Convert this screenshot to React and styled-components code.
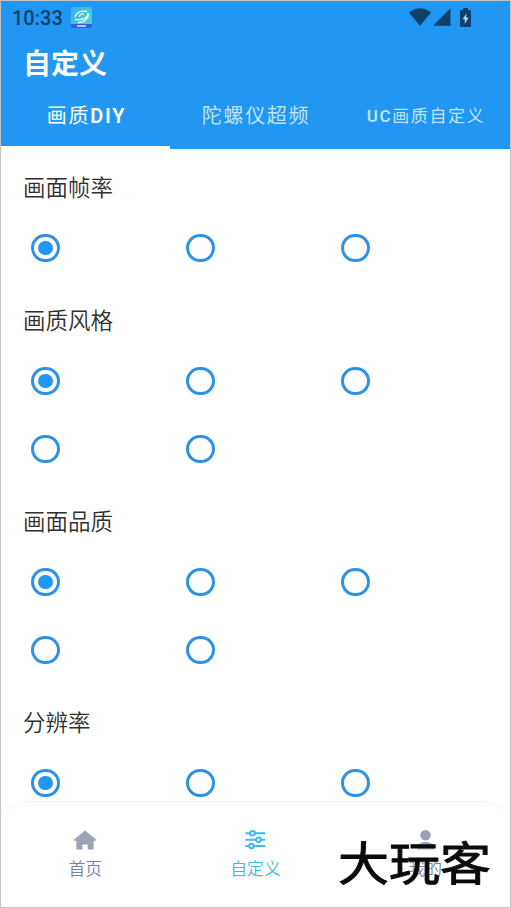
import styled, {createGlobalStyle} from "styled-components"

const GlobalStyle = createGlobalStyle`
  * {
    box-sizing: border-box;
  }

  body {
    margin: 0;
    background: #ffffff;
    font-family: Roboto, "Noto Sans CJK SC", sans-serif;
  }

  h1, h2 {
    margin: 0;
  }
`

const Screen = styled.div`
  position: relative;
  display: flex;
  flex-direction: column;
  width: 511px;
  height: 908px;
  overflow: hidden;
  border: 1px solid #c3c3c3;
  background: #ffffff;
`

const Header = styled.header`
  flex: none;
  height: 148px;
  background: #2196f3;
  color: #ffffff;
`

const StatusBar = styled.div`
  display: flex;
  align-items: center;
  height: 32px;
  padding: 0 39px 0 11px;
  color: #0d406b;
  font-size: 20px;
  line-height: 32px;

  .app {
    margin-left: 8px;
  }

  .wifi {
    margin-left: auto;
  }

  .signal {
    margin-left: 2px;
  }

  .battery {
    margin-left: 9px;
  }
`

const Time = styled.span`
  padding-top: 2px;
  font-weight: 470;
`

const Title = styled.h1`
  height: 58px;
  padding: 3px 0 0 22px;
  font-size: 28px;
  font-weight: 700;
  line-height: 58px;
`

const Tabs = styled.div`
  display: grid;
  grid-template-columns: 169px 170px 170px;
`

const Tab = styled.div`
  height: 58px;
  padding: 10px 0 0 2px;
  border-bottom: 3px solid ${({active}) => active ? "#ffffff" : "transparent"};
  color: ${({active}) => active ? "#ffffff" : "#bfe3fc"};
  font-size: ${({size}) => size || 20}px;
  letter-spacing: ${({spacing}) => spacing || 1.7}px;
  line-height: 30px;
  text-align: center;
  white-space: nowrap;

  b {
    font-weight: 600;
  }
`

const Content = styled.main`
  flex: 1;
  min-height: 0;
  padding: 19px 22px 0;
  overflow: hidden;
`

const Section = styled.section`
  padding-bottom: 19px;
`

const Heading = styled.h2`
  height: 40px;
  margin-bottom: 6px;
  color: #303030;
  font-size: 22.5px;
  font-weight: 350;
  line-height: 41px;
`

const Options = styled.div`
  display: grid;
  grid-template-columns: repeat(3, 155.2px);
  grid-auto-rows: 68px;
  align-items: center;
  padding-left: 8px;
`

const Radio = styled.span`
  display: flex;
  align-items: center;
  justify-content: center;
  width: 28.6px;
  height: 28.6px;
  border: 3px solid #2d92e6;
  border-radius: 50%;

  &::after {
    content: "";
    display: ${({checked}) => checked ? "block" : "none"};
    width: 14.6px;
    height: 14.6px;
    border-radius: 50%;
    background: #2196f3;
  }
`

const BottomNav = styled.nav`
  flex: none;
  display: grid;
  grid-template-columns: repeat(3, 1fr);
  height: 106px;
  border-top: 1px solid #f3f3f3;
  border-radius: 28px 28px 0 0;
  background: #ffffff;
`

const NavItem = styled.div`
  display: flex;
  flex-direction: column;
  align-items: center;
  padding-top: 26px;
  color: ${({active}) => active ? "#3dbbe8" : "#7882ae"};
  font-size: 16.8px;
  font-weight: 350;
  line-height: 24px;

  &:first-child {
    padding-right: 1px;
  }

  svg {
    margin-bottom: 5px;
    color: ${({active}) => active ? "#3dbbe8" : "#9ca3b5"};
  }
`

const Watermark = styled.div`
  position: absolute;
  left: 337px;
  top: 824px;
  color: #0b0b0b;
  font-family: "Noto Sans CJK SC", sans-serif;
  font-size: 51px;
  font-weight: 400;
  line-height: 70px;
  white-space: nowrap;
  text-shadow: 0 0 1px #d8cfa6, 0 0 2px #e8e0c0;
  transform: scaleY(.9);
  -webkit-text-stroke: 1px #0b0b0b;
`

const AppBadge = () => (
    <svg className="app" width="21" height="21" viewBox="0 0 21 21">
        <defs>
            <linearGradient id="badge" x1="0" y1="0" x2="1" y2="1">
                <stop offset="0" stopColor="#35b2ee"/>
                <stop offset="1" stopColor="#55d5c8"/>
            </linearGradient>
        </defs>
        <rect width="21" height="21" rx="3" fill="url(#badge)"/>
        <path d="M0 17h21v1a3 3 0 0 1-3 3H3a3 3 0 0 1-3-3z" fill="#315be5"/>
        <path d="M4 10C6 5 11 3.500 16 4.500M17 6C17 11 12 13 4 12.500M7 15.500c5 .5 10-3 10.500-8" fill="none" stroke="#e9fffb" strokeWidth="1.400"/>
        <path d="M8 9.500c1-2 3-3 5-2.500" fill="none" stroke="#e9fffb" strokeWidth="1.400"/>
        <path d="M6 19h9" stroke="#dfe8ff" strokeWidth="1.500"/>
    </svg>
)

const WifiIcon = () => (
    <svg className="wifi" width="22" height="18" viewBox="0 0 22 18">
        <path d="M0 4.800C6-1.200 16-1.200 22 4.800L11 17.800z" fill="currentColor"/>
    </svg>
)

const SignalIcon = () => (
    <svg className="signal" width="18" height="18" viewBox="0 0 18 18">
        <path d="M17.500 0v17.800H0z" fill="currentColor"/>
    </svg>
)

const BatteryIcon = () => (
    <svg className="battery" width="11" height="19" viewBox="0 0 11 19">
        <path d="M3 0h5v2h2a1 1 0 0 1 1 1v15a1 1 0 0 1-1 1H1a1 1 0 0 1-1-1V3a1 1 0 0 1 1-1h2z" fill="currentColor"/>
        <path d="M6.300 5.500v4h2.200L4.800 16v-4.700H2.700z" fill="#a5dcff"/>
    </svg>
)

const HomeIcon = () => (
    <svg width="24" height="24" viewBox="0 0 24 24">
        <path d="M12 2.400 23.300 11.700 22.500 12.800H20.700V20.500a1 1 0 0 1-1 1H14.700V16.400H9.500V21.500H4.300a1 1 0 0 1-1-1V12.800H1.500L.7 11.700z" fill="currentColor"/>
    </svg>
)

const SlidersIcon = () => (
    <svg width="24" height="24" viewBox="0 0 24 24" fill="none" stroke="currentColor" strokeWidth="2">
        <path d="M2.500 5.300H7M12 5.300H22M2.500 11.700H13M18 11.700H22M2.500 18H6M11 18H22"/>
        <circle cx="9.500" cy="5.300" r="2.300"/>
        <circle cx="15.500" cy="11.700" r="2.300"/>
        <circle cx="8.500" cy="18" r="2.300"/>
    </svg>
)

const UserIcon = () => (
    <svg width="24" height="24" viewBox="0 0 24 24" fill="currentColor">
        <circle cx="12.500" cy="7.200" r="5.200"/>
        <path d="M4 21.500c0-5 3-7.500 8.500-7.500s8.500 2.500 8.500 7.500z"/>
    </svg>
)

const groups = [
    {name: "画面帧率", count: 3},
    {name: "画质风格", count: 5},
    {name: "画面品质", count: 5},
    {name: "分辨率", count: 3},
]

const App = () => {
    return (<>
        <GlobalStyle/>
        <Screen>
            <Header>
                <StatusBar>
                    <Time>10:33</Time>
                    <AppBadge/>
                    <WifiIcon/>
                    <SignalIcon/>
                    <BatteryIcon/>
                </StatusBar>
                <Title>自定义</Title>
                <Tabs>
                    <Tab active>画质<b>DIY</b></Tab>
                    <Tab>陀螺仪超频</Tab>
                    <Tab size={17} spacing={1.6}><b>UC</b>画质自定义</Tab>
                </Tabs>
            </Header>
            <Content>
                {groups.map(({name, count}) => (
                    <Section key={name}>
                        <Heading>{name}</Heading>
                        <Options>
                            {Array.from({length: count}, (_, i) => (
                                <Radio key={i} checked={i === 0}/>
                            ))}
                        </Options>
                    </Section>
                ))}
            </Content>
            <BottomNav>
                <NavItem><HomeIcon/>首页</NavItem>
                <NavItem active><SlidersIcon/>自定义</NavItem>
                <NavItem><UserIcon/>我的</NavItem>
            </BottomNav>
            <Watermark>大玩客</Watermark>
        </Screen>
    </>);
}

export default App
